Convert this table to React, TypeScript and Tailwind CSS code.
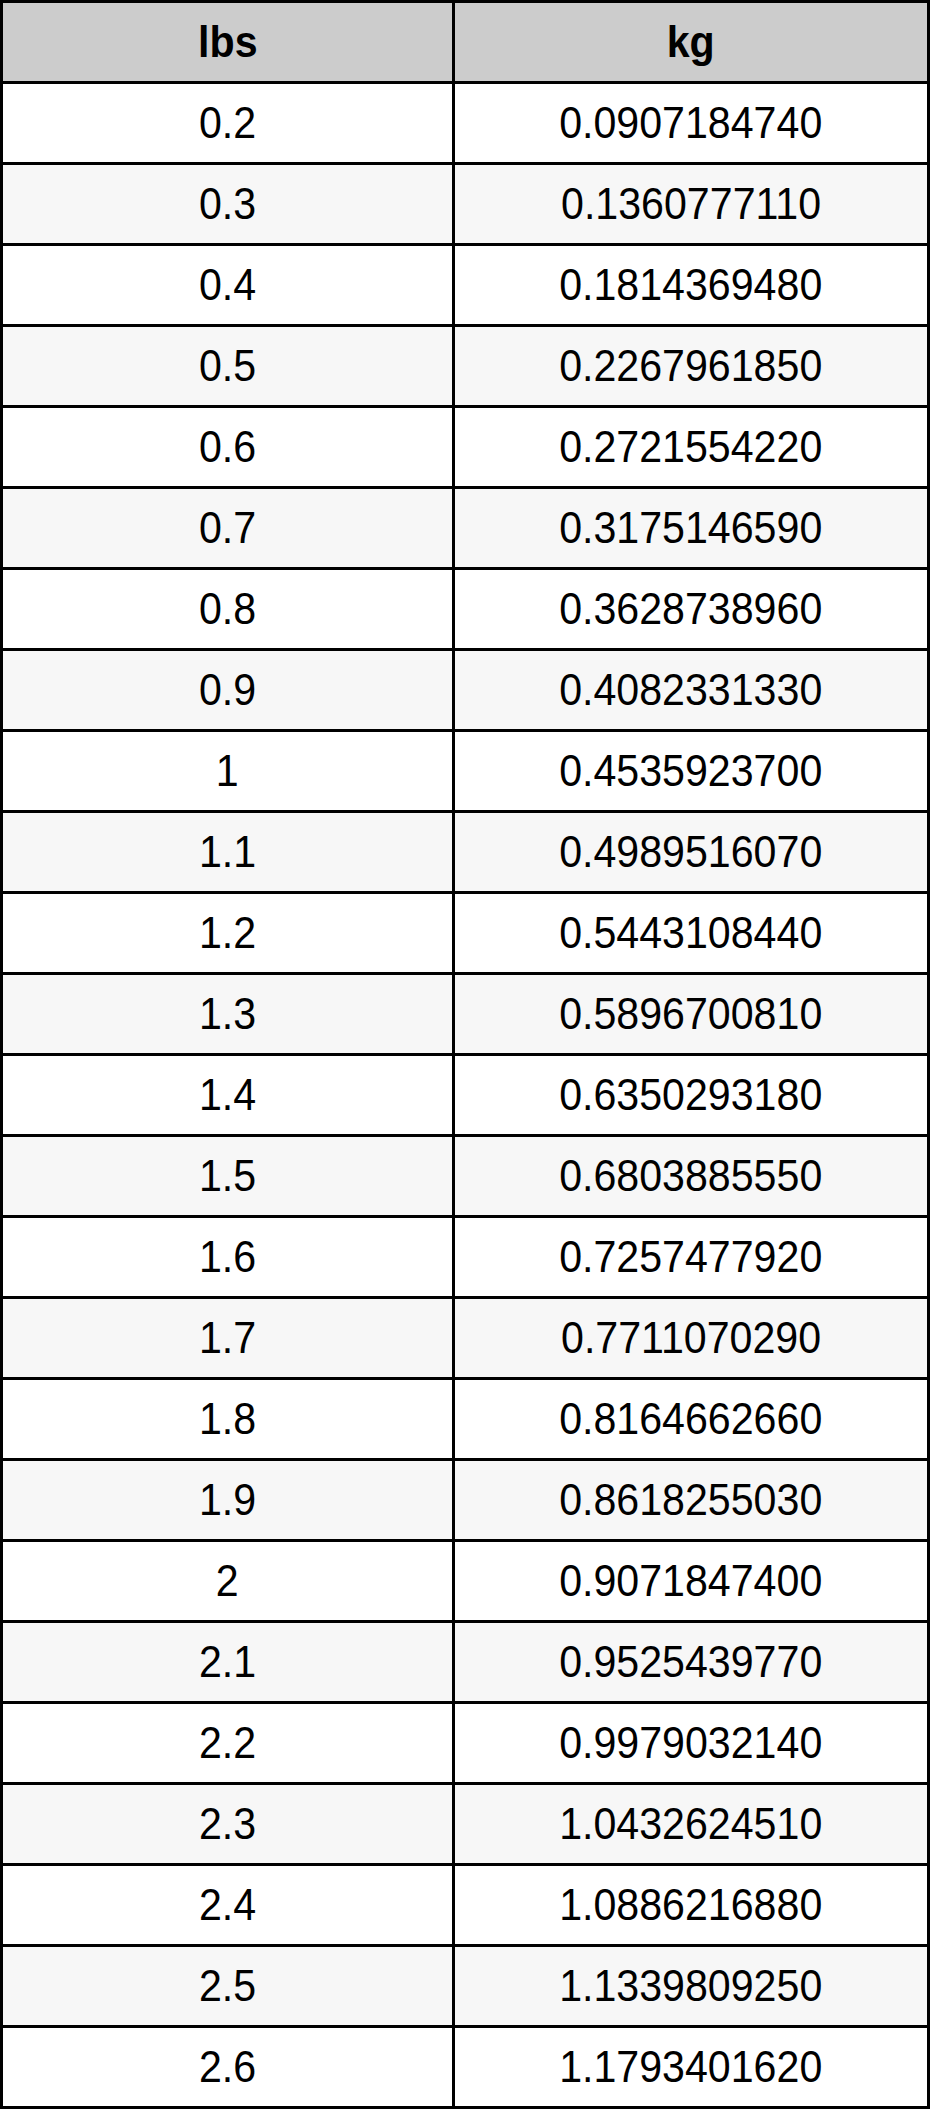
const rows: [string, string][] = [
  ["0.2", "0.0907184740"],
  ["0.3", "0.1360777110"],
  ["0.4", "0.1814369480"],
  ["0.5", "0.2267961850"],
  ["0.6", "0.2721554220"],
  ["0.7", "0.3175146590"],
  ["0.8", "0.3628738960"],
  ["0.9", "0.4082331330"],
  ["1", "0.4535923700"],
  ["1.1", "0.4989516070"],
  ["1.2", "0.5443108440"],
  ["1.3", "0.5896700810"],
  ["1.4", "0.6350293180"],
  ["1.5", "0.6803885550"],
  ["1.6", "0.7257477920"],
  ["1.7", "0.7711070290"],
  ["1.8", "0.8164662660"],
  ["1.9", "0.8618255030"],
  ["2", "0.9071847400"],
  ["2.1", "0.9525439770"],
  ["2.2", "0.9979032140"],
  ["2.3", "1.0432624510"],
  ["2.4", "1.0886216880"],
  ["2.5", "1.1339809250"],
  ["2.6", "1.1793401620"],
];

const Cell = ({ children, bg, bold }: { children: string; bg: string; bold?: boolean }) => (
  <div className={`h-[78px] flex items-center justify-center ${bg}`}>
    <span
      className={`inline-block scale-x-[0.935] text-[44px] leading-none text-black ${bold ? "font-bold" : "font-normal"}`}
    >
      {children}
    </span>
  </div>
);

export default function App() {
  return (
    <div
      className="w-[930px] bg-white"
      style={{ fontFamily: '"Liberation Sans", Arial, sans-serif' }}
    >
      <div className="grid grid-cols-[449px_472px] gap-[3px] bg-black p-[3px]">
        <Cell bg="bg-[#cccccc]" bold>lbs</Cell>
        <Cell bg="bg-[#cccccc]" bold>kg</Cell>
        {rows.map(([lbs, kg], i) => {
          const bg = i % 2 === 0 ? "bg-white" : "bg-[#f7f7f7]";
          return [
            <Cell key={`l${i}`} bg={bg}>{lbs}</Cell>,
            <Cell key={`k${i}`} bg={bg}>{kg}</Cell>,
          ];
        })}
      </div>
    </div>
  );
}
